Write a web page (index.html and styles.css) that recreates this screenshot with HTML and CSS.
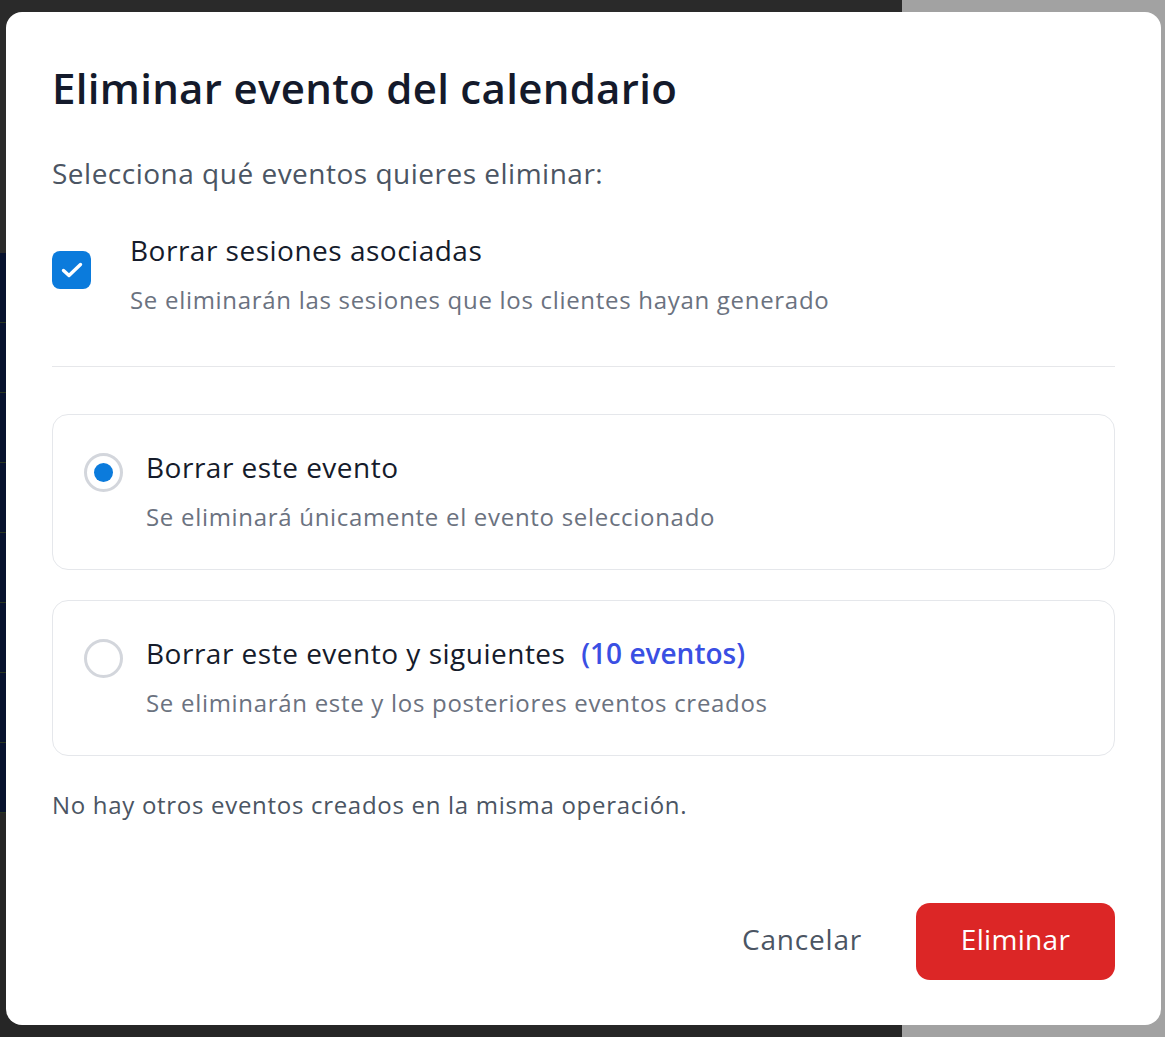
FILE: index.html
```html
<!DOCTYPE html>
<html lang="es">
<head>
<meta charset="utf-8">
<title>Eliminar evento del calendario</title>
<link rel="stylesheet" href="styles.css">
</head>
<body>
<div class="backdrop">
  <div class="bg-left">
    <div class="bg-top"></div>
    <div class="bg-rows">
      <div class="bg-row"></div><div class="bg-row"></div><div class="bg-row"></div><div class="bg-row"></div>
      <div class="bg-row"></div><div class="bg-row"></div><div class="bg-row"></div><div class="bg-row"></div>
    </div>
  </div>
  <div class="bg-right"></div>
</div>

<div class="modal" role="dialog" aria-labelledby="t">
  <h1 id="t" class="title">Eliminar evento del calendario</h1>
  <p class="lead">Selecciona qué eventos quieres eliminar:</p>

  <label class="check-row">
    <span class="checkbox">
      <svg viewBox="0 0 26 26" width="26" height="26"><path d="M4.5 13.5l5.5 5L21.5 7.5" fill="none" stroke="#fff" stroke-width="3.4" stroke-linecap="round" stroke-linejoin="round"/></svg>
    </span>
    <span class="opt-text">
      <span class="opt-label">Borrar sesiones asociadas</span>
      <span class="opt-desc">Se eliminarán las sesiones que los clientes hayan generado</span>
    </span>
  </label>

  <hr class="divider">

  <div class="card">
    <span class="radio radio-on"><span class="dot"></span></span>
    <span class="opt-text">
      <span class="opt-label">Borrar este evento</span>
      <span class="opt-desc">Se eliminará únicamente el evento seleccionado</span>
    </span>
  </div>

  <div class="card">
    <span class="radio"></span>
    <span class="opt-text">
      <span class="opt-label">Borrar este evento y siguientes <span class="count">(10 eventos)</span></span>
      <span class="opt-desc">Se eliminarán este y los posteriores eventos creados</span>
    </span>
  </div>

  <p class="note">No hay otros eventos creados en la misma operación.</p>

  <div class="actions">
    <button class="btn-cancel">Cancelar</button>
    <button class="btn-danger">Eliminar</button>
  </div>
</div>
</body>
</html>
```

FILE: styles.css
```css
* { box-sizing: border-box; }
html, body { margin: 0; padding: 0; }
body {
  width: 1165px;
  height: 1037px;
  overflow: hidden;
  font-family: "Open Sans", "Noto Sans", sans-serif;
  position: relative;
}

.backdrop {
  display: flex;
  width: 1165px;
  height: 1037px;
}
.bg-left {
  width: 902px;
  background: #262626;
  display: flex;
  flex-direction: column;
}
.bg-top { height: 253px; background: #2a2a2a; }
.bg-rows { display: flex; flex-direction: column; }
.bg-row { height: 70px; background: #07122e; border-bottom: 1px solid #28351f; }
.bg-right { flex: 1; background: #a2a2a2; }

.modal {
  position: absolute;
  left: 6px;
  top: 12px;
  width: 1155px;
  height: 1013px;
  background: #fff;
  border-radius: 16px;
  padding: 52px 46px 0 46px;
  display: flex;
  flex-direction: column;
}

.title {
  margin: 0;
  font-size: 42px;
  font-weight: 600;
  letter-spacing: 0.3px;
  color: #141a2b;
  line-height: 48px;
}
.lead {
  margin: 43px 0 0 0;
  font-size: 28px;
  letter-spacing: 0.5px;
  color: #4b5563;
  line-height: 36px;
}

.check-row {
  display: flex;
  align-items: flex-start;
  margin-top: 42px;
  gap: 39px;
}
.checkbox {
  width: 39px;
  height: 38px;
  border-radius: 8px;
  background: #0b7bdc;
  display: flex;
  align-items: center;
  justify-content: center;
  margin-top: 18px;
  flex-shrink: 0;
}
.opt-text { display: flex; flex-direction: column; }
.opt-label {
  font-size: 28px;
  letter-spacing: 0.5px;
  color: #151b2b;
  line-height: 34px;
}
.opt-desc {
  font-size: 24px;
  letter-spacing: 0.7px;
  color: #6b7280;
  line-height: 30px;
  margin-top: 18px;
}
.count { color: #3a4fe3; font-weight: 600; margin-left: 8px; letter-spacing: 0; }

.divider {
  border: 0;
  border-top: 1px solid #e6e7ea;
  margin: 51px 0 0 0;
}

.card {
  display: flex;
  align-items: flex-start;
  gap: 23px;
  border: 1px solid #e5e7eb;
  border-radius: 16px;
  height: 156px;
  padding: 35px 31px 0 31px;
  margin-top: 47px;
}
.card + .card { margin-top: 30px; }
.radio {
  width: 39px;
  height: 39px;
  border-radius: 50%;
  border: 3px solid #d3d6dc;
  display: flex;
  align-items: center;
  justify-content: center;
  margin-top: 3px;
  flex-shrink: 0;
}
.dot { width: 19px; height: 19px; border-radius: 50%; background: #0b7bdc; }

.note {
  margin: 34px 0 0 0;
  font-size: 24px;
  letter-spacing: 0.7px;
  color: #4b5563;
  line-height: 30px;
}

.actions {
  margin-top: 83px;
  display: flex;
  justify-content: flex-end;
  align-items: center;
  gap: 54px;
}
.btn-cancel {
  border: 0;
  background: none;
  font-family: inherit;
  font-size: 28px;
  letter-spacing: 0.8px;
  color: #4b5563;
  padding: 0 0 6px 0;
}
.btn-danger {
  width: 199px;
  height: 77px;
  border: 0;
  border-radius: 14px;
  background: #dc2626;
  color: #fff;
  font-family: inherit;
  font-size: 28px;
  letter-spacing: 0.3px;
  padding: 0 0 5px 0;
}
```
